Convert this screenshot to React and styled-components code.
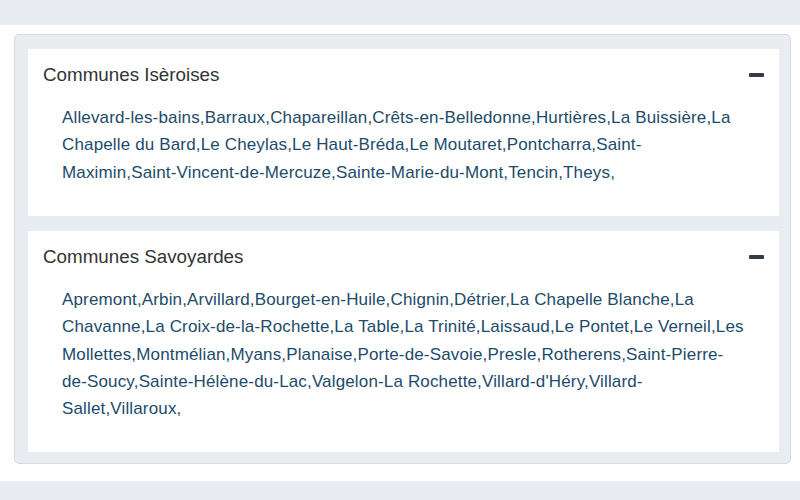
import React from "react";
import styled, { createGlobalStyle } from "styled-components";

const Global = createGlobalStyle`
  html, body { margin: 0; padding: 0; background: #ffffff; }
  body { font-family: "Liberation Sans", Arial, sans-serif; }
`;

const Page = styled.div`
  width: 800px;
  height: 500px;
  display: flex;
  flex-direction: column;
  overflow: hidden;
`;

const Band = styled.div`
  height: ${(p) => p.$h}px;
  background: #e9ecf1;
  flex: ${(p) => (p.$grow ? 1 : "none")};
`;

const Main = styled.div`
  padding: 9px 9px 17px 14px;
`;

const Box = styled.div`
  background: #e9ecf1;
  border: 1px solid #d7dbe2;
  border-radius: 5px;
  padding: 14px 11px 11px 13px;
  display: flex;
  flex-direction: column;
  gap: 15px;
`;

const Card = styled.section`
  background: #ffffff;
  padding: 11px 15px 0 15px;
  height: ${(p) => p.$h}px;
  box-sizing: border-box;
`;

const Header = styled.div`
  display: flex;
  align-items: center;
  justify-content: space-between;
  height: 30px;
`;

const Title = styled.h3`
  margin: 0;
  font-size: 18.8px;
  font-weight: normal;
  color: #333333;
  line-height: 30px;
`;

const Minus = styled.span`
  display: block;
  width: 15px;
  height: 4px;
  border-radius: 1px;
  background: #343a46;
`;

const List = styled.p`
  margin: 14px 20px 0 19px;
  font-size: 17px;
  letter-spacing: 0.15px;
  line-height: 27.3px;
  color: #1d4b6b;
`;

const iseroises =
  "Allevard-les-bains,Barraux,Chapareillan,Crêts-en-Belledonne,Hurtières,La Buissière,La Chapelle du Bard,Le Cheylas,Le Haut-Bréda,Le Moutaret,Pontcharra,Saint-Maximin,Saint-Vincent-de-Mercuze,Sainte-Marie-du-Mont,Tencin,Theys,";
const savoyardes =
  "Apremont,Arbin,Arvillard,Bourget-en-Huile,Chignin,Détrier,La Chapelle Blanche,La Chavanne,La Croix-de-la-Rochette,La Table,La Trinité,Laissaud,Le Pontet,Le Verneil,Les Mollettes,Montmélian,Myans,Planaise,Porte-de-Savoie,Presle,Rotherens,Saint-Pierre-de-Soucy,Sainte-Hélène-du-Lac,Valgelon-La Rochette,Villard-d'Héry,Villard-Sallet,Villaroux,";

function Panel({ title, text, h }) {
  return (
    <Card $h={h}>
      <Header>
        <Title>{title}</Title>
        <Minus />
      </Header>
      <List>{text}</List>
    </Card>
  );
}

export default function App() {
  return (
    <Page>
      <Global />
      <Band $h={25} />
      <Main>
        <Box>
          <Panel title="Communes Isèroises" text={iseroises} h={167} />
          <Panel title="Communes Savoyardes" text={savoyardes} h={221} />
        </Box>
      </Main>
      <Band $grow />
    </Page>
  );
}
